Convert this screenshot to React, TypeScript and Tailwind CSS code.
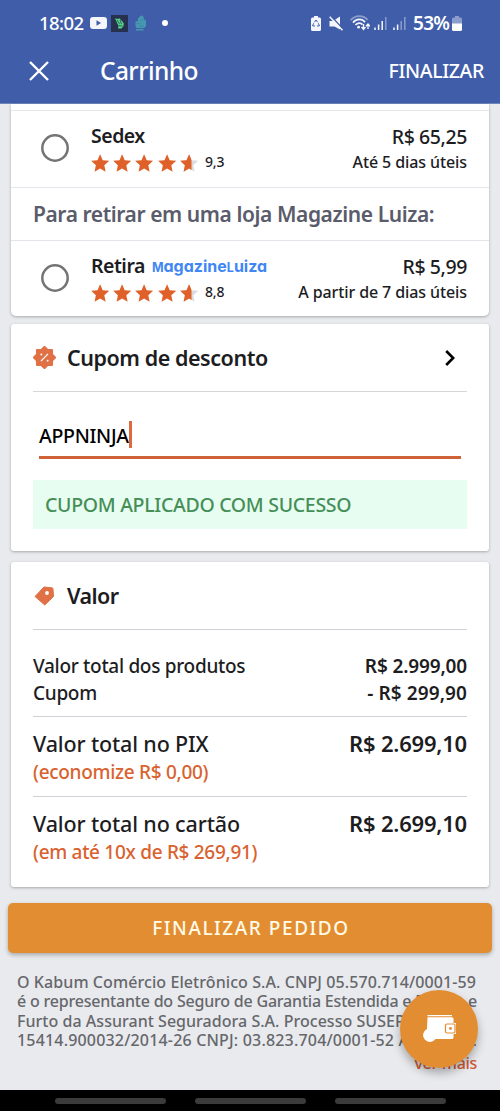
import { ReactNode } from "react";

const STAR = "M12 1.2l3.3 7.3 7.9.9-5.9 5.4 1.6 7.9L12 18.700l-6.900 4 1.600-7.900L.8 9.400l7.900-.9z";

function Stars() {
  return (
    <div className="flex gap-[4px]">
      {[0, 1, 2, 3].map((i) => (
        <svg key={i} viewBox="0.600 1 22.800 22" className="h-[18px] w-[18.2px]" preserveAspectRatio="none">
          <path d={STAR} fill="#df6029" />
        </svg>
      ))}
      <svg viewBox="0.600 1 22.800 22" className="h-[18px] w-[18.2px]" preserveAspectRatio="none">
        <defs>
          <clipPath id="half">
            <rect x="0" y="0" width="15" height="24" />
          </clipPath>
        </defs>
        <path d={STAR} fill="#dcdcdf" />
        <path d={STAR} fill="#df6029" clipPath="url(#half)" />
      </svg>
    </div>
  );
}

interface ShippingRowProps {
  name: string;
  brand?: ReactNode;
  score: string;
  price: string;
  deadline: string;
}

function ShippingRow({ name, brand, score, price, deadline }: ShippingRowProps) {
  return (
    <div className="flex h-[76px] items-start pt-[12px] pr-[22px] pl-[30px] text-[#1d1d1f]">
      <svg viewBox="0 0 28 28" className="mt-[11px] h-7 w-7 shrink-0">
        <circle cx="14" cy="14" r="12.700" fill="none" stroke="#747474" strokeWidth="2.500" />
      </svg>
      <div className="ml-[22px]">
        <div className="flex h-[26px] items-center">
          <span className="text-[19.5px] font-semibold tracking-[-0.5px]">{name}</span>
          {brand}
        </div>
        <div className="flex h-[28px] items-center">
          <Stars />
          <span className="-mt-[3px] ml-[7px] text-[14px] font-medium tracking-[-0.1px]">{score}</span>
        </div>
      </div>
      <div className="ml-auto text-right">
        <div className="flex h-[28px] items-center justify-end text-[19.5px] font-medium tracking-[-0.4px]">{price}</div>
        <div className="flex h-[22px] items-center justify-end text-[16px] font-medium tracking-[-0.1px]">{deadline}</div>
      </div>
    </div>
  );
}

function StatusBar() {
  return (
    <div className="flex h-[46px] items-center pr-[38px] pl-[39px]">
      <span className="w-[45px] text-[18.5px] font-medium tracking-[-0.6px]">18:02</span>
      <svg viewBox="0 0 17 12" className="ml-[6px] h-3 w-[17px]">
        <rect width="17" height="12" rx="3" fill="#f4f6fb" />
        <path d="M6.500 3.300v5.400L11 6z" fill="#405da9" />
      </svg>
      <svg viewBox="0 0 17 17" className="ml-1 h-[17px] w-[17px]">
        <rect width="17" height="17" fill="#27314f" />
        <path d="M4 3.500l3.500.5.5-1 3 3 1.800 2.500-.3 2.500-2 2.500H7l.500-2.500z" fill="#52d287" />
        <path d="M6 5l2.500 4m.5-4l1.500 4m-3 1.500l4 .5" stroke="#27314f" strokeWidth=".7" fill="none" />
      </svg>
      <svg viewBox="0 0 12 16" className="ml-[7px] h-4 w-3">
        <path d="M3 3.500L6 .5l2 .5 1.500 4 1.500.5v5.500l-2 2H1.500L.5 10.500V6.500L3 6z" fill="#4698b0" />
        <path d="M1 14.700h7.500" stroke="#4698b0" strokeWidth="1.600" />
        <path d="M1.500 8.500h3.500m1-3.500h2.500M4 11h5" stroke="#3f78a9" strokeWidth=".6" />
      </svg>
      <div className="ml-[15px] h-[6px] w-[6px] rounded-full bg-white" />

      <div className="ml-auto flex items-center">
        <svg viewBox="0 0 10 15" className="h-[15px] w-[10px]">
          <path d="M3 0h4v1.500h1.500A1.500 1.500 0 0 1 10 3v10.500A1.500 1.500 0 0 1 8.500 15h-7A1.500 1.500 0 0 1 0 13.500V3a1.500 1.500 0 0 1 1.500-1.500H3z" fill="#f4f6fb" />
          <path d="M3.400 6.200L5 4l1.600 2.200M7.300 7.300l1.200 2.500-2.500.2M2.700 7.300l-1.200 2.500 2.500.2" fill="none" stroke="#405da9" strokeWidth="1" />
        </svg>
        <svg viewBox="0 0 14 15" className="ml-[8px] h-[15px] w-[14px]">
          <path d="M.5 5h3.500L11 .5v13L5.500 10.500h-5z" fill="#f4f6fb" />
          <path d="M2 0l12 13" stroke="#405da9" strokeWidth="1.400" />
          <path d="M.7.8l12.800 13.400" stroke="#f4f6fb" strokeWidth="1.500" />
        </svg>
        <svg viewBox="0 0 20 16" className="ml-[7px] h-4 w-5" fill="none">
          <path d="M.7 5.300C5-.2 13.500-.2 17.500 5" stroke="#8b9dcb" strokeWidth="1.800" />
          <path d="M3 7.600c3.300-4.200 9-4.200 12-.4" stroke="#f4f6fb" strokeWidth="1.700" />
          <path d="M5.400 10c2-2.500 5.300-2.600 7.200-.4" stroke="#f4f6fb" strokeWidth="1.700" />
          <circle cx="8.600" cy="12.200" r="1.400" fill="#f4f6fb" />
          <path d="M13.500 9v5m-2-2l2 2.500 2-2.500M18 14V9m-2 2.300L18 9l2 2.300" stroke="#f4f6fb" strokeWidth="1.300" />
        </svg>
        <svg viewBox="0 0 13 13" className="ml-[4px] h-[13px] w-[13px]">
          <path d="M1 10.500V13M4.600 7.500V13M8.200 4V13" stroke="#f4f6fb" strokeWidth="1.500" />
          <path d="M11.800 0v13" stroke="#8b9dcb" strokeWidth="1.500" />
        </svg>
        <svg viewBox="0 0 13 13" className="ml-[6px] h-[13px] w-[13px]">
          <path d="M1 10.500V13M4.600 7.500V13" stroke="#f4f6fb" strokeWidth="1.500" />
          <path d="M8.200 4V13M11.800 0v13" stroke="#8b9dcb" strokeWidth="1.500" />
        </svg>
        <span className="ml-[7px] w-[38px] text-[19px] font-semibold tracking-[-0.7px] whitespace-nowrap">53%</span>
        <svg viewBox="0 0 10 15" className="ml-[1px] h-[15px] w-[10px]">
          <path d="M3 0h4v1.500h1.500A1.500 1.500 0 0 1 10 3v5H0V3a1.500 1.500 0 0 1 1.500-1.500H3z" fill="#8b9dcb" />
          <path d="M0 7.500h10v6A1.500 1.500 0 0 1 8.500 15h-7A1.500 1.500 0 0 1 0 13.500z" fill="#fff" />
        </svg>
      </div>
    </div>
  );
}

function Header() {
  return (
    <header className="h-[104px] border-b border-[#6f85bd] bg-[#405da9] text-white">
      <StatusBar />
      <div className="flex h-[50px] items-center pr-[16px] pl-[29px]">
        <svg viewBox="0 0 20 20" className="h-5 w-5" fill="none" stroke="#fff" strokeWidth="2.400">
          <path d="M1 1l18 18M19 1L1 19" />
        </svg>
        <h1 className="ml-[51px] text-[24.5px] font-medium tracking-[-0.6px]">Carrinho</h1>
        <span className="ml-auto text-[19.5px] font-medium tracking-[-0.35px]">FINALIZAR</span>
      </div>
    </header>
  );
}

function CouponCard() {
  return (
    <section className="mt-2 h-[227px] rounded-[3px] bg-white px-[22px] shadow-[0_1px_3px_rgba(0,0,0,0.28)]">
      <div className="flex h-[68px] items-center border-b border-[#d5d6da]">
        <svg viewBox="0 0 24 24" className="h-[23px] w-[23px]">
          <g fill="#e07146" stroke="#e07146" strokeWidth="2.400" strokeLinejoin="round">
            <rect x="4.300" y="4.300" width="15.400" height="15.400" />
            <rect x="4.300" y="4.300" width="15.400" height="15.400" transform="rotate(45 12 12)" />
          </g>
          <path d="M8.300 15.800l7.400-7.600" stroke="#fff" strokeWidth="1.400" />
          <circle cx="8.700" cy="8.800" r="1" fill="#fff" />
          <circle cx="15.300" cy="15.300" r="1" fill="#fff" />
        </svg>
        <h2 className="mt-[2px] ml-[11px] text-[21.5px] font-semibold tracking-[-0.45px] text-[#1d1d1f]">Cupom de desconto</h2>
        <svg viewBox="0 0 10 16" className="mr-[12px] ml-auto h-4 w-[10px]" fill="none" stroke="#000" strokeWidth="2.600">
          <path d="M1.200 1l7 7-7 7" />
        </svg>
      </div>
      <div className="mx-[6px] mt-[29px] flex h-[38px] items-start border-b-[3px] border-[#cf6237]">
        <span className="text-[19.5px] leading-[29px] font-medium tracking-[-0.3px] text-black">APPNINJA</span>
        <div className="h-[27px] w-[3px] bg-[#dc6a3c]" />
      </div>
      <div className="mt-[21px] flex h-[49px] items-center bg-[#e8fdf2] pl-3 text-[19.5px] font-medium tracking-[-0.3px] whitespace-nowrap text-[#458f57]">
        CUPOM APLICADO COM SUCESSO
      </div>
    </section>
  );
}

interface TotalProps {
  label: string;
  value: string;
  note: string;
}

function Total({ label, value, note }: TotalProps) {
  return (
    <div className="pt-[13px]">
      <div className="flex h-[28px] items-center justify-between">
        <span className="text-[21.5px] font-medium tracking-[-0.14px]">{label}</span>
        <span className="-mt-[2px] text-[22px] font-semibold tracking-[-0.2px]">{value}</span>
      </div>
      <div className="flex h-[29px] items-center text-[19px] font-medium tracking-[-0.3px] text-[#d9622f]">{note}</div>
    </div>
  );
}

function ValueCard() {
  return (
    <section className="mt-[11px] h-[325px] rounded-[3px] bg-white px-[22px] text-[#1d1d1f] shadow-[0_1px_3px_rgba(0,0,0,0.28)]">
      <div className="flex h-[68px] items-center border-b border-[#cfd1d7]">
        <svg viewBox="0 0 20 20" className="ml-[1px] h-5 w-5">
          <path
            d="M10 1L18 1.800Q19 2 19 3L19.500 10.500 10.800 19 1 10.500z"
            fill="#e07146"
            stroke="#e07146"
            strokeLinejoin="round"
          />
          <circle cx="13" cy="7" r="1.900" fill="#fff" />
        </svg>
        <h2 className="mt-[2px] ml-[13px] text-[21.5px] font-semibold tracking-[-0.6px]">Valor</h2>
      </div>
      <div className="h-[87px] border-b border-[#cfd1d7] pt-[23px] text-[19px]">
        <div className="flex h-[27px] items-center justify-between">
          <span className="font-medium tracking-[-0.3px]">Valor total dos produtos</span>
          <span className="font-semibold tracking-[-0.15px]">R$ 2.999,00</span>
        </div>
        <div className="flex h-[26px] items-center justify-between">
          <span className="font-medium tracking-[-0.3px]">Cupom</span>
          <span className="font-semibold tracking-[0.1px]">- R$ 299,90</span>
        </div>
      </div>
      <div className="h-[80px] border-b border-[#cfd1d7]">
        <Total label="Valor total no PIX" value="R$ 2.699,10" note="(economize R$ 0,00)" />
      </div>
      <Total label="Valor total no cartão" value="R$ 2.699,10" note="(em até 10x de R$ 269,91)" />
    </section>
  );
}

export default function App() {
  return (
    <div className="relative flex h-[1111px] w-[500px] flex-col overflow-hidden bg-[#e9eaee] font-['Noto_Sans',sans-serif]">
      <Header />
      <main className="flex-1 px-[11px]">
        <section className="h-[212px] rounded-b-[5px] bg-white shadow-[0_1px_3px_rgba(0,0,0,0.28)]">
          <div className="h-[7px] border-b border-[#e6e7ea]" />
          <ShippingRow name="Sedex" score="9,3" price="R$ 65,25" deadline="Até 5 dias úteis" />
          <div className="flex h-[54px] items-center border-y border-[#e4e5ea] pt-[2px] pl-[22px] text-[21px] font-semibold tracking-[-0.42px] whitespace-nowrap text-[#5a5c6b]">
            Para retirar em uma loja Magazine Luiza:
          </div>
          <ShippingRow
            name="Retira"
            brand={
              <span className="ml-[7px] font-[Inter] text-[16px] font-bold text-[#3f87f5] [font-feature-settings:'cv11']">
                <span className="text-[12.5px]">M</span>agazine<span className="text-[12.5px]">L</span>uiza
              </span>
            }
            score="8,8"
            price="R$ 5,99"
            deadline="A partir de 7 dias úteis"
          />
        </section>
        <CouponCard />
        <ValueCard />
        <button className="-mx-[3px] mt-4 flex h-[50px] w-[484px] items-center justify-center rounded-[5px] bg-[#e38d33] pt-px pl-[2px] text-[19px] font-medium tracking-[1.55px] text-[#fffbe6] shadow-[0_2px_4px_rgba(0,0,0,0.28)]">
          FINALIZAR PEDIDO
        </button>
        <footer className="mt-[20px] pr-[12px] pl-[6px] text-[16px] leading-[19.4px] font-medium tracking-[0.08px] whitespace-nowrap text-[#66676b]">
          <p>O Kabum Comércio Eletrônico S.A. CNPJ 05.570.714/0001-59</p>
          <p className="tracking-[-0.2px]">é o representante do Seguro de Garantia Estendida e Roubo e</p>
          <p className="tracking-[0.03px]">Furto da Assurant Seguradora S.A. Processo SUSEP</p>
          <p className="flex justify-between">
            <span className="tracking-[0.18px]">15414.900032/2014-26 CNPJ: 03.823.704/0001-52 A</span>
            <span>.</span>
          </p>
          <p className="mt-[3px] text-right tracking-[-0.3px] text-[#cf5a33]">ver mais</p>
        </footer>
      </main>

      <div className="absolute top-[990px] left-[400px] flex h-[78px] w-[78px] items-center justify-center rounded-full bg-[#e38d33] shadow-[0_5px_10px_rgba(0,0,0,0.3)]">
        <svg viewBox="0 0 34 28" className="h-7 w-[34px]" fill="#fff">
          <path d="M5.500 0H30v1.300H5.500zM5.500 2.300H30a1.500 1.500 0 0 1 1.500 1.500V8H34v11h-2.500v3.500A1.500 1.500 0 0 1 30 24H13.500A6.800 6.800 0 1 1 5 14z" />
          <rect x="23.500" y="9" width="9.500" height="9" rx="1.500" fill="#fff" stroke="#e38d33" strokeWidth="1.200" />
          <circle cx="28.500" cy="13.500" r="1.400" fill="#e38d33" />
        </svg>
      </div>

      <nav className="flex h-[21px] items-center justify-center gap-[29px] bg-black pt-[1px]">
        <div className="h-[6px] w-[111px] rounded-full bg-[#3b3b3b]" />
        <div className="h-[6px] w-[111px] rounded-full bg-[#3b3b3b]" />
        <div className="h-[6px] w-[111px] rounded-full bg-[#3b3b3b]" />
      </nav>
    </div>
  );
}
